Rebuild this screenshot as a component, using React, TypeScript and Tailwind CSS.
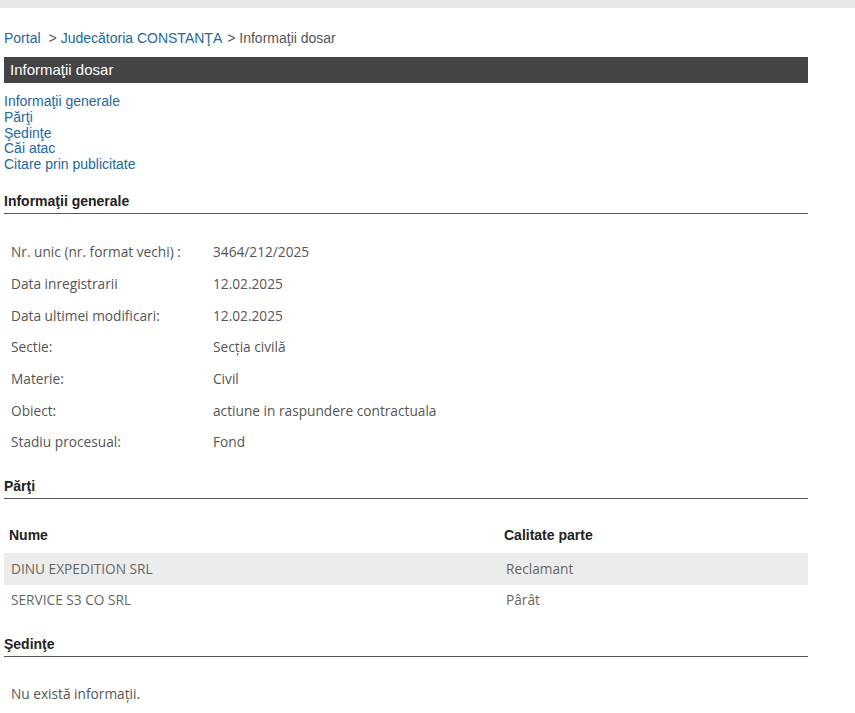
const generale: [string, string][] = [
  ['Nr. unic (nr. format vechi) :', '3464/212/2025'],
  ['Data inregistrarii', '12.02.2025'],
  ['Data ultimei modificari:', '12.02.2025'],
  ['Sectie:', 'Secția civilă'],
  ['Materie:', 'Civil'],
  ['Obiect:', 'actiune in raspundere contractuala'],
  ['Stadiu procesual:', 'Fond'],
];

const parti = [
  { nume: 'DINU EXPEDITION SRL', calitate: 'Reclamant' },
  { nume: 'SERVICE S3 CO SRL', calitate: 'Pârât' },
];

const links = ['Informaţii generale', 'Părţi', 'Şedinţe', 'Căi atac', 'Citare prin publicitate'];

const arial = "font-['Liberation_Sans',Arial,sans-serif]";
const body = "font-['Open_Sans','DejaVu_Sans',sans-serif]";

function Heading({ children, className = '' }: { children: React.ReactNode; className?: string }) {
  return (
    <div className={`${arial} text-[14px] leading-4 font-bold text-[#222] pb-[4px] border-b border-[#555] ${className}`}>
      {children}
    </div>
  );
}

export default function App() {
  return (
    <div className="min-h-screen bg-white">
      <div className="h-2 bg-[#e6e6e6]" />
      <div className="ml-1 w-[804px]">
        <div className={`${arial} mt-[22px] text-[14px] leading-4 text-[#555]`}>
          <a className="text-[#23679f]">Portal</a>
          <span className="ml-[8px]">&gt; </span>
          <a className="text-[#23679f]">Judecătoria CONSTANŢA</a>
          <span className="ml-[5px]">&gt; Informaţii dosar</span>
        </div>

        <div className={`${arial} mt-[11px] h-[26px] bg-[#444] text-white text-[15px] flex items-center pl-[6px]`}>
          Informaţii dosar
        </div>

        <div className={`${arial} mt-[11px] flex flex-col text-[14px] leading-[15.75px] text-[#23679f]`}>
          {links.map(l => (
            <a key={l}>{l}</a>
          ))}
        </div>

        <Heading className="mt-[20px]">Informaţii generale</Heading>
        <div className={`${body} mt-[23px] text-[13.7px] text-[#555]`}>
          {generale.map(([k, v]) => (
            <div key={k} className="h-[31.67px] grid grid-cols-[209px_1fr] items-center">
              <div className="pl-[7px]">{k}</div>
              <div>{v}</div>
            </div>
          ))}
        </div>

        <Heading className="mt-[20px]">Părţi</Heading>
        <div className="mt-[22px]">
          <div className={`${arial} h-[32px] grid grid-cols-[500px_1fr] items-center pb-[4px] text-[14px] font-bold text-[#222]`}>
            <div className="pl-[5px]">Nume</div>
            <div>Calitate parte</div>
          </div>
          {parti.map((p, i) => (
            <div
              key={p.nume}
              className={`${body} h-[31.5px] grid grid-cols-[502px_1fr] items-center text-[13.7px] text-[#666] ${i % 2 === 0 ? 'bg-[#ececec]' : ''}`}
            >
              <div className="pl-[7px]">{p.nume}</div>
              <div>{p.calitate}</div>
            </div>
          ))}
        </div>

        <Heading className="mt-[20px]">Şedinţe</Heading>
        <div className={`${body} mt-[27px] pl-[7px] text-[13.7px] text-[#555]`}>Nu există informații.</div>
      </div>
    </div>
  );
}
